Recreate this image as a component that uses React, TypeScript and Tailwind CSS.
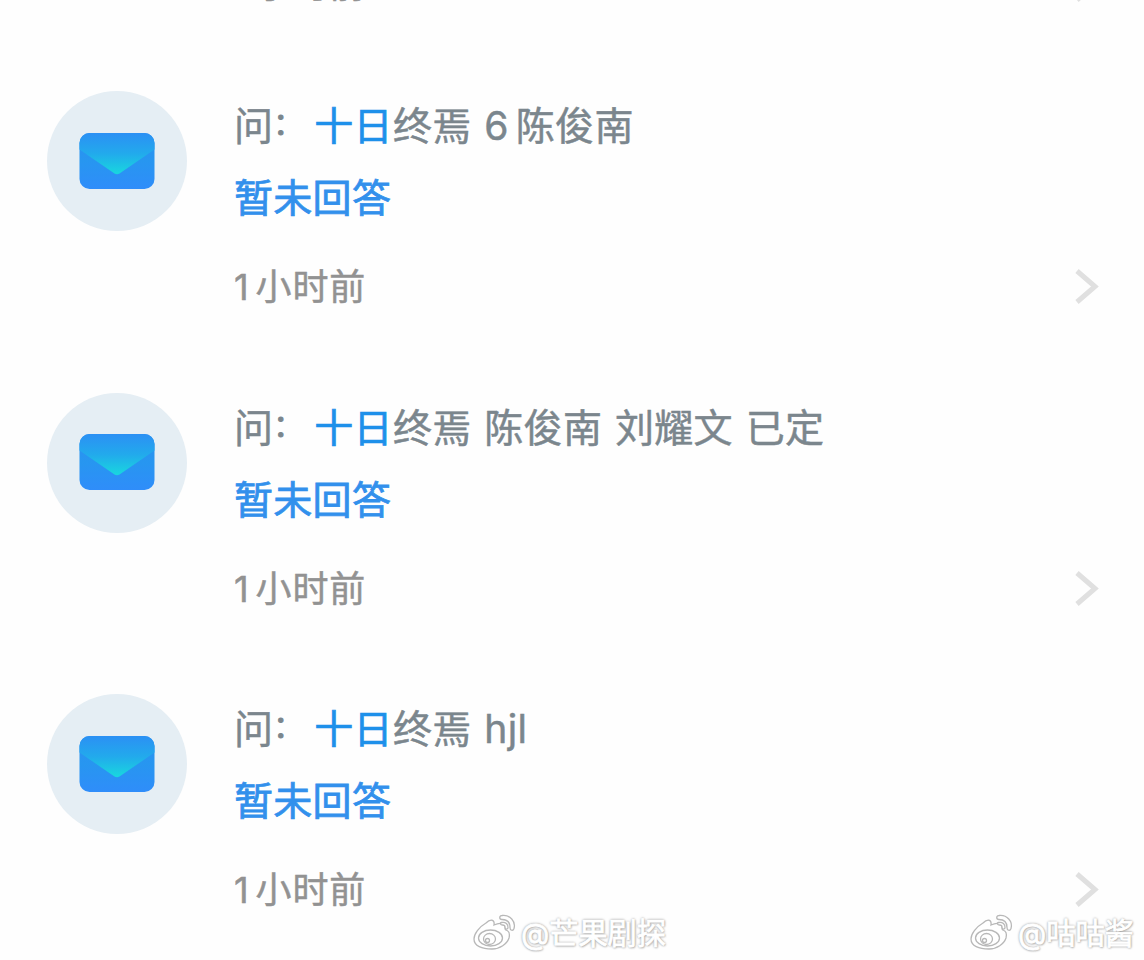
interface Question {
  id: number;
  keyword: string;
  rest: string;
  answer: string;
  time: string;
}

const questions: Question[] = [
  { id: 1, keyword: '十日', rest: '终焉 6陈俊南', answer: '暂未回答', time: '1小时前' },
  { id: 2, keyword: '十日', rest: '终焉 陈俊南 刘耀文 已定', answer: '暂未回答', time: '1小时前' },
  { id: 3, keyword: '十日', rest: '终焉 hjl', answer: '暂未回答', time: '1小时前' },
];

function MailIcon() {
  return (
    <svg width="76" height="57" viewBox="0 0 76 57">
      <defs>
        <linearGradient id="mail-body" x1="0" y1="0" x2="0" y2="1">
          <stop offset="0" stopColor="#2b90f2" />
          <stop offset="0.5" stopColor="#2796f0" />
          <stop offset="1" stopColor="#2f8dfa" />
        </linearGradient>
        <linearGradient id="mail-flap" x1="0" y1="0" x2="0" y2="1">
          <stop offset="0" stopColor="#2b90f4" />
          <stop offset="0.5" stopColor="#22aaec" />
          <stop offset="1" stopColor="#18d8de" />
        </linearGradient>
      </defs>
      <rect x="0.5" y="0" width="75" height="56" rx="10" fill="url(#mail-body)" />
      <path
        d="M10.5 0h55a10 10 0 0 1 10 10v6.500L40.500 40.500q-2.500 1.600-5 0L0.500 16.500v-6.500a10 10 0 0 1 10-10z"
        fill="url(#mail-flap)"
      />
    </svg>
  );
}

function TimeRow({ time }: { time: string }) {
  const [, count, unit] = time.match(/^(\d+)(.*)$/) ?? ['', '', time];

  return (
    <div className="flex h-[44px] w-full items-center justify-between">
      <span className="text-[36px] leading-[44px] tracking-[0.9px] text-[#929292] [-webkit-text-stroke:0.5px_#929292]">
        <span className="mr-[6px]">{count}</span>
        {unit}
      </span>
      <svg width="28" height="40" viewBox="0 0 28 40" fill="none">
        <path d="M3 4L21 19.500L3 35" stroke="#e0e0e0" strokeWidth="5" />
      </svg>
    </div>
  );
}

function QuestionItem({ item }: { item: Question }) {
  // digits get a little air on the right before the next character
  const parts = item.rest.split(/(\d+)/);

  return (
    <li className="flex h-[301.5px] items-start">
      <div className="flex size-[140px] shrink-0 items-center justify-center rounded-full bg-[#e5eef4]">
        <MailIcon />
      </div>
      <div className="-mt-px ml-[47px] flex-1">
        <p className="h-[72px] text-[39px] leading-[72px] tracking-[0.3px] whitespace-nowrap text-[#7b868d] [word-spacing:1.5px] [-webkit-text-stroke:0.5px]">
          问<span className="inline-block w-[40px] -translate-y-[6px] text-[30px] leading-none [-webkit-text-stroke:1px]">：</span>
          <span className="ml-[1px] text-[#1e90ea] [-webkit-text-stroke:0.7px]">{item.keyword}</span>
          {parts.map((part, idx) =>
            /^\d+$/.test(part) ? (
              <span key={idx} className="mr-[7px]">{part}</span>
            ) : (
              part
            )
          )}
        </p>
        <p className="h-[72px] text-[39px] leading-[72px] tracking-[0.3px] text-[#3290ec] [-webkit-text-stroke:0.8px]">
          {item.answer}
        </p>
        <div className="pt-[31px]">
          <TimeRow time={item.time} />
        </div>
      </div>
    </li>
  );
}

function Watermark({ name }: { name: string }) {
  return (
    <div className="flex items-center gap-[4px] whitespace-nowrap">
      <svg width="44" height="40" viewBox="0 0 44 40" fill="#fff" stroke="#b8b8b8" strokeWidth="1.300">
        <path d="M13 9c4-4 9-4 8 2c6-3 12-2 11 3c0 1 0 2 1 2c3 1 4 4 3 8c-2 6-9 11-17 11C9 35 1 32 1 25c0-5 5-12 12-16z" />
        <ellipse cx="17.500" cy="24" rx="12" ry="8" />
        <ellipse cx="16.500" cy="25" rx="6" ry="5.500" />
        <circle cx="14.500" cy="26.500" r="2" />
        <path d="M29 1.500c8-1 14 6 12 13c-1 3-4 2-4-1c0-5-3-8-8-8c-3 0-3-4 0-4z" />
        <path d="M28.500 8.500c4-1 7 2 6.500 5.500c-1 2-3 1-3-1c0-1.500-1-2-2.500-2c-2 0-3-2-1-2.500z" />
      </svg>
      <span className="text-[29.2px] leading-[40px] text-white [-webkit-text-stroke:0.8px_#fff] [text-shadow:0_0_2px_#999,0_0_3px_#aaa,1px_1px_2px_#bbb]">
        @{name}
      </span>
    </div>
  );
}

export default function App() {
  return (
    <div
      lang="zh-CN"
      className="relative h-[960px] w-[1144px] overflow-hidden bg-[#fefefe] font-['Inter','Noto_Sans_CJK_SC',sans-serif]"
    >
      {/* tail of the item scrolled off the top */}
      <div className="flex h-[91px] items-start pr-[42px] pl-[234px]">
        <div className="-mt-[37px] w-full">
          <TimeRow time="1小时前" />
        </div>
      </div>
      <ul className="pr-[42px] pl-[47px]">
        {questions.map((item) => (
          <QuestionItem key={item.id} item={item} />
        ))}
      </ul>
      <div className="absolute top-[914px] left-[473px]">
        <Watermark name="芒果剧探" />
      </div>
      <div className="absolute top-[914px] left-[970px]">
        <Watermark name="咕咕酱" />
      </div>
    </div>
  );
}
